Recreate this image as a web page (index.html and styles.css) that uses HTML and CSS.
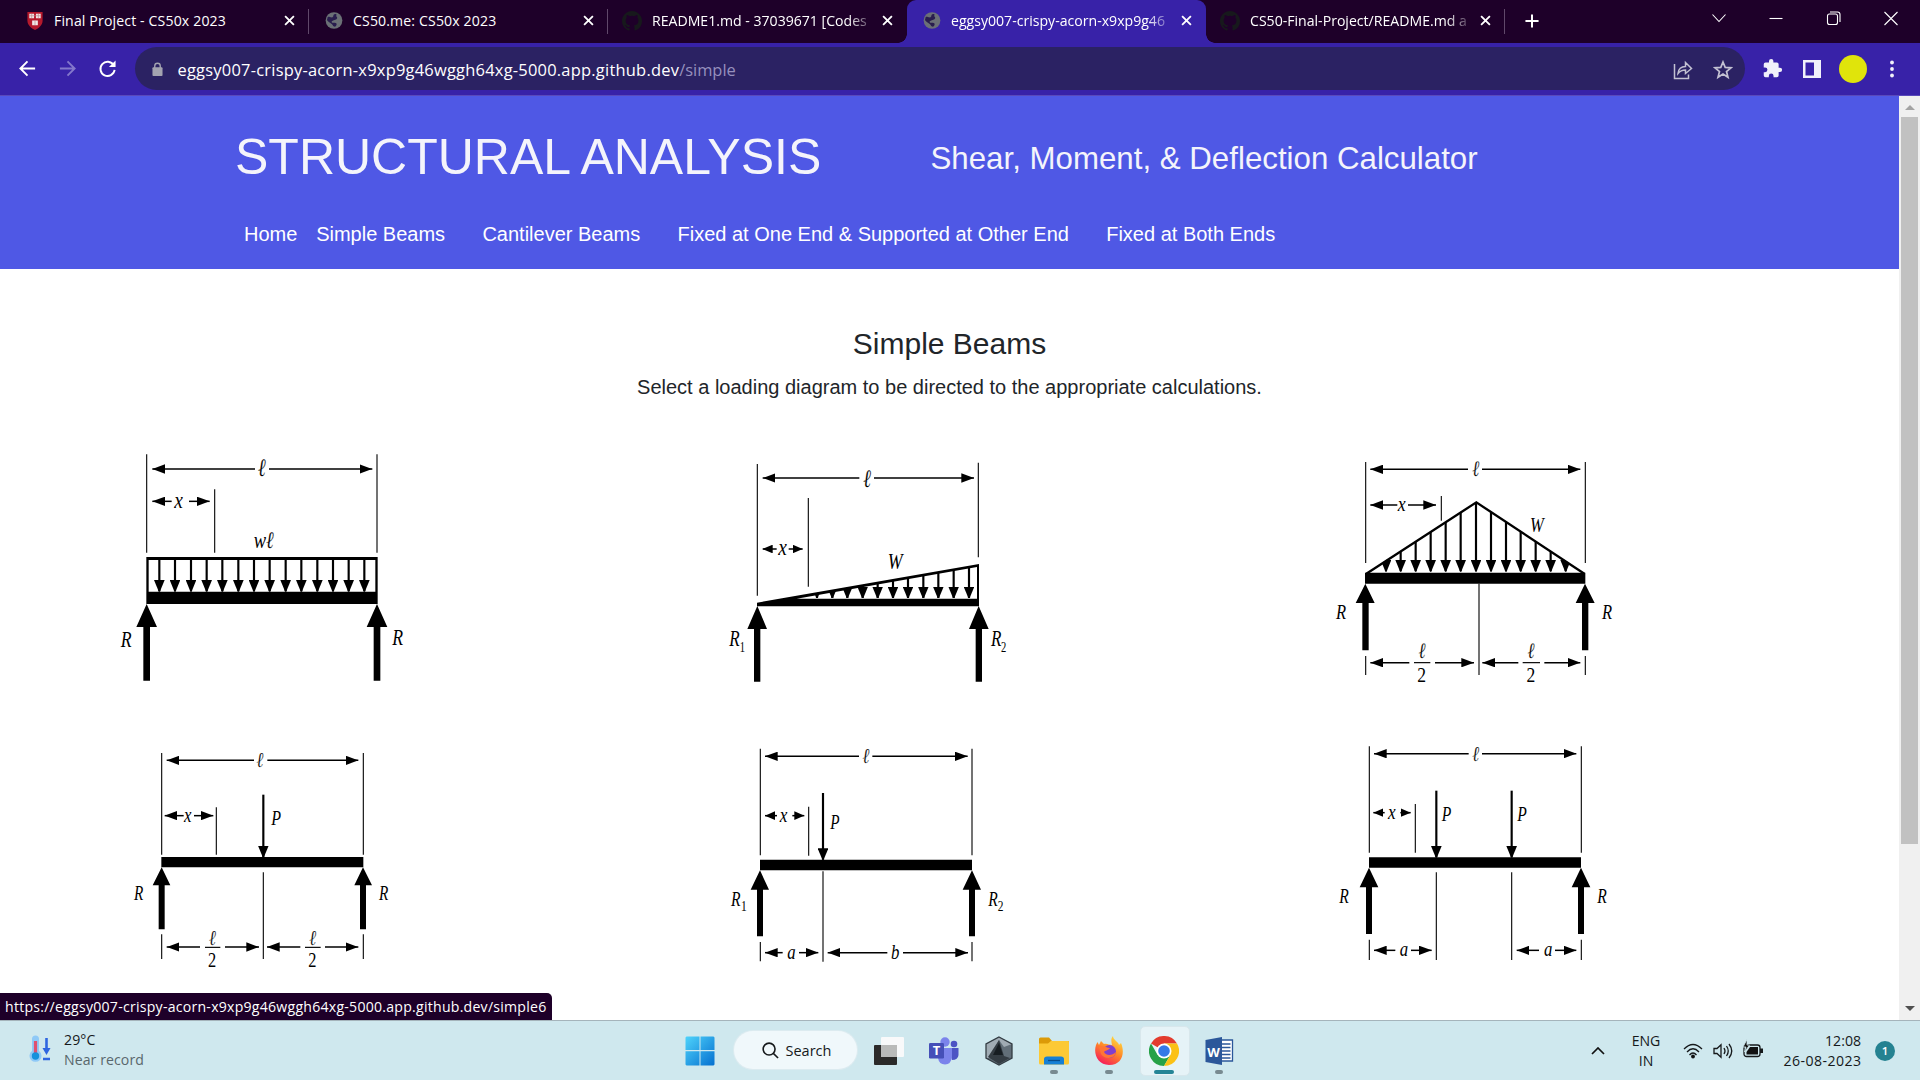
FILE: index.html
```html
<!DOCTYPE html>
<html lang="en">
<head>
<meta charset="utf-8">
<title>Structural Analysis</title>
<link rel="stylesheet" href="styles.css">
</head>
<body>
<svg class="defs" width="0" height="0" aria-hidden="true">
  <defs>
    <marker id="dim" viewBox="0 0 38 28" refX="38" refY="14" markerWidth="38" markerHeight="28" markerUnits="userSpaceOnUse" orient="auto-start-reverse"><path d="M0 0L38 14L0 28Z"/></marker>
    <marker id="dims" viewBox="0 0 30 26" refX="30" refY="13" markerWidth="30" markerHeight="26" markerUnits="userSpaceOnUse" orient="auto-start-reverse"><path d="M0 0L30 13L0 26Z"/></marker>
    <marker id="load" viewBox="0 0 35 32" refX="34" refY="16" markerWidth="35" markerHeight="32" markerUnits="userSpaceOnUse" orient="auto"><path d="M0 0L35 14.500V17.500L0 32Z"/></marker>
    <symbol id="globe" viewBox="0 0 20 20"><circle cx="10" cy="10" r="9.3" fill="#6b7076"/><path class="cut" d="M3 6C5 5.500 6 7 8 6.500C10 6 8.500 4 10.500 3C12 2.200 13.500 3 12.500 4.500C12 6 14 5.500 13.500 7.500C13 9.500 10.500 9 8 10.500C6.500 11.500 8 13 9.500 12.500C12 12 14 13 12.500 15.500C11.500 17.500 9.500 17 8.800 15.500C8 13.500 3.500 12 2.200 9.500Z"/></symbol>
    <symbol id="octo" viewBox="0 0 16 16"><path d="M8 0C3.580 0 0 3.580 0 8c0 3.540 2.290 6.530 5.470 7.590.4.070.55-.17.55-.38v-1.490c-2.010.37-2.530-.49-2.690-.94-.09-.23-.48-.94-.82-1.130-.28-.15-.68-.52-.01-.53.63-.01 1.080.58 1.230.82.72 1.210 1.870.87 2.330.66.07-.52.28-.87.51-1.070-1.780-.2-3.640-.89-3.640-3.950 0-.87.31-1.590.82-2.150-.08-.2-.36-1.020.08-2.120 0 0 .67-.21 2.200.82a7.400 7.400 0 0 1 4 0c1.530-1.040 2.200-.82 2.200-.82.44 1.100.16 1.920.08 2.120.51.56.82 1.270.82 2.150 0 3.070-1.870 3.750-3.650 3.950.29.25.54.73.54 1.480v2.200c0 .21.15.46.55.38A8 8 0 0 0 16 8c0-4.420-3.580-8-8-8Z" fill="currentColor"/></symbol>
    <symbol id="x" viewBox="0 0 12 12"><path d="M1.200 1.200L10.800 10.800M10.800 1.200L1.200 10.800" stroke="#fff" stroke-width="2" fill="none"/></symbol>
  </defs>
</svg>

<div class="tabstrip">
  <div class="tab">
    <svg class="fav" viewBox="0 0 18 20"><path d="M1 1H17V10C17 15 13 18 9 20C5 18 1 15 1 10Z" fill="#b5192c"/><path d="M3 3H8V7.500H3ZM10 3H15V7.500H10ZM6 10H12V15H6Z" fill="#f1e6e6"/><path d="M5.500 3V7.500M12.500 3V7.500M9 10V15M3 5H15" stroke="#b5868a" stroke-width=".7"/></svg>
    <span class="title">Final Project - CS50x 2023</span><svg class="close"><use href="#x"/></svg>
  </div>
  <div class="tab"><svg class="fav"><use href="#globe"/></svg><span class="title">CS50.me: CS50x 2023</span><svg class="close"><use href="#x"/></svg></div>
  <div class="tab last"><svg class="fav octo"><use href="#octo"/></svg><span class="title fade">README1.md - 37039671 [Codes</span><svg class="close"><use href="#x"/></svg></div>
  <div class="tab active"><svg class="fav"><use href="#globe"/></svg><span class="title fade">eggsy007-crispy-acorn-x9xp9g46</span><svg class="close"><use href="#x"/></svg></div>
  <div class="tab"><svg class="fav octo"><use href="#octo"/></svg><span class="title fade">CS50-Final-Project/README.md a</span><svg class="close"><use href="#x"/></svg></div>
  <svg class="plus" viewBox="0 0 16 16"><path d="M8 .5V15.500M.5 8H15.500" stroke="#fff" stroke-width="2.300"/></svg>
  <div class="winctl">
    <svg viewBox="0 0 16 16"><path d="M1.500 4.500L8 11.500L14.500 4.500"/></svg>
    <svg viewBox="0 0 16 16"><path d="M1.500 8.500H14.500"/></svg>
    <svg viewBox="0 0 16 16"><rect x="1.500" y="4" width="10" height="10.500" rx="2"/><path d="M4 2H11.500Q14 2 14 4.500V12"/></svg>
    <svg viewBox="0 0 16 16"><path d="M1.500 2L14.500 15M14.500 2L1.500 15"/></svg>
  </div>
</div>

<div class="toolbar">
  <div class="navbtns">
    <svg viewBox="0 0 20 20"><path d="M18 10H3M10 2.500L2.500 10L10 17.500"/></svg>
    <svg class="dim" viewBox="0 0 20 20"><path d="M2 10H17M10 2.500L17.500 10L10 17.500"/></svg>
    <svg viewBox="0 0 20 20"><path d="M16.500 6.500A7.500 7.500 0 1 0 17.500 11.500"/><path d="M18.500 1.500V8.500H11.500Z" fill="#fff" stroke="none"/></svg>
  </div>
  <div class="omnibox">
    <svg class="lock" viewBox="0 0 12 15"><rect x="0.500" y="5" width="11" height="9.500" rx="1" fill="#a3a3b0"/><path d="M3 6V3.700A3 3 0 0 1 9 3.700V6" fill="none" stroke="#a3a3b0" stroke-width="1.500"/></svg>
    <span class="url">eggsy007-crispy-acorn-x9xp9g46wggh64xg-5000.app.github.dev<span class="path">/simple</span></span>
    <svg class="oicon" viewBox="0 0 20 20"><path d="M1.500 4V18.500H15.500V14.500M5 13.500C5.500 9 8 6.500 12.500 6.500V2.500L18.500 8.500L12.500 13.500V10C9 10 7 11 5 13.500Z"/></svg>
    <svg class="oicon star" viewBox="0 0 20 20"><path d="M10 2L12.200 7.400L18 7.800L13.500 11.500L15 17.300L10 14.100L5 17.300L6.500 11.500L2 7.800L7.800 7.400Z"/></svg>
  </div>
  <div class="actions">
    <svg viewBox="0 0 24 24"><path fill="#f1f1fa" d="M20.500 11H19V7a2 2 0 0 0-2-2h-4V3.500a2.500 2.500 0 0 0-5 0V5H4a2 2 0 0 0-2 2v3.800h1.500a2.700 2.700 0 0 1 0 5.400H2V20a2 2 0 0 0 2 2h3.800v-1.500a2.700 2.700 0 0 1 5.400 0V22H17a2 2 0 0 0 2-2v-4h1.500a2.500 2.500 0 0 0 0-5z"/></svg>
    <svg class="panel" viewBox="0 0 20 20"><path fill="#f1f1fa" fill-rule="evenodd" d="M1 1H19V19H1ZM3.500 3.500V16.500H12V3.500Z"/></svg>
    <span class="avatar"></span>
    <svg class="dots" viewBox="0 0 6 20"><g fill="#f1f1fa"><circle cx="3" cy="3.500" r="1.900"/><circle cx="3" cy="10" r="1.900"/><circle cx="3" cy="16.500" r="1.900"/></g></svg>
  </div>
</div>

<div class="viewport">
  <div class="page">
    <header class="header">
      <div class="brand"><h1>STRUCTURAL ANALYSIS</h1><p>Shear, Moment, &amp; Deflection Calculator</p></div>
      <nav class="menu"><a class="home">Home</a><a>Simple Beams</a><a>Cantilever Beams</a><a>Fixed at One End &amp; Supported at Other End</a><a>Fixed at Both Ends</a></nav>
    </header>
    <main>
      <h2>Simple Beams</h2>
      <p class="lead">Select a loading diagram to be directed to the appropriate calculations.</p>
      <div class="beams">
        <svg class="beam big" viewBox="0 0 990 810">
          <path class="ext" d="M140 73V368M831 73V368M344 178V368"/>
          <path class="arr" d="M465 117H157"/><path class="arr" d="M507 117H817"/><path class="arr" d="M215 214H157"/><path class="arr" d="M267 214H329"/>
          <path d="M139 381H833V522H139ZM146 390V485H826V390Z" fill-rule="evenodd"/>
          <g class="loads"><path d="M178 388V484"/><path d="M225 388V484"/><path d="M273 388V484"/><path d="M320 388V484"/><path d="M367 388V484"/><path d="M415 388V484"/><path d="M462 388V484"/><path d="M509 388V484"/><path d="M557 388V484"/><path d="M604 388V484"/><path d="M652 388V484"/><path d="M699 388V484"/><path d="M746 388V484"/><path d="M793 388V484"/></g>
          <path d="M140 522L171 591H150V752H130V591H109ZM831 522L862 591H841V752H821V591H800Z"/>
          <text class="c ell" transform="translate(485 138) scale(.8 1.05)">ℓ</text>
          <text transform="translate(223 234) scale(.82 1)">x</text>
          <text transform="translate(461 353) scale(.78 1)">w<tspan class="ell">ℓ</tspan></text>
          <text transform="translate(62 651) scale(.75 1)">R</text><text transform="translate(877 646) scale(.75 1)">R</text>
        </svg>
        <svg class="beam big" viewBox="0 0 990 810">
          <path class="ext" d="M172 102V497M835 98V382M325 204V470"/>
          <path class="arr" d="M478 144H188"/><path class="arr" d="M522 144H822"/><path class="arrs" d="M230 357H188"/><path class="arrs" d="M266 357H308"/>
          <path d="M171 518L837 402V529H171ZM290 506H831V411Z" fill-rule="evenodd"/>
          <clipPath id="wedge"><path d="M172 520L836 405V528H172Z"/></clipPath>
          <g class="loads" clip-path="url(#wedge)"><path d="M351 400V504"/><path d="M397 400V504"/><path d="M442 400V504"/><path d="M488 400V504"/><path d="M533 400V504"/><path d="M579 400V504"/><path d="M624 400V504"/><path d="M670 400V504"/><path d="M715 400V504"/><path d="M761 400V504"/><path d="M807 400V504"/></g>
          <path d="M172 528L201 597H181V755H162V597H142ZM836 528L866 597H846V755H827V597H807Z"/>
          <text class="c ell" transform="translate(501 170) scale(.8 1.05)">ℓ</text>
          <text transform="translate(235 376) scale(.82 1)">x</text>
          <text transform="translate(563 416) scale(.75 1)">W</text>
          <text transform="translate(88 649) scale(.72 1)">R</text><text class="sub" transform="translate(119 665) scale(.72 1)">1</text>
          <text transform="translate(873 649) scale(.72 1)">R</text><text class="sub" transform="translate(903 665) scale(.72 1)">2</text>
        </svg>
        <svg class="beam" viewBox="0 0 990 810">
          <path class="ext" d="M167 96V399M826 96V399M394 198V272M507 461V735M167 678V735M826 678V735M312 698H361M638 698H690"/>
          <path class="arr" d="M474 118H181"/><path class="arr" d="M516 118H811"/><path class="arr" d="M262 225H181"/><path class="arr" d="M294 225H378"/>
          <path class="arr" d="M298 698H181"/><path class="arr" d="M375 698H492"/><path class="arr" d="M625 698H517"/><path class="arr" d="M703 698H811"/>
          <path d="M169 431L499 217L823 431" fill="none" stroke="#000" stroke-width="7"/>
          <path d="M165 428H826V461H165Z"/>
          <clipPath id="tri"><path d="M165 432L499 215L827 432Z"/></clipPath>
          <g class="loads" clip-path="url(#tri)"><path d="M228 215V424"/><path d="M272 215V424"/><path d="M317 215V424"/><path d="M362 215V424"/><path d="M407 215V424"/><path d="M452 215V424"/><path d="M498 215V424"/><path d="M543 215V424"/><path d="M588 215V424"/><path d="M632 215V424"/><path d="M677 215V424"/><path d="M722 215V424"/><path d="M767 215V424"/></g>
          <path d="M166 461L194 519H176V661H157V519H137ZM825 461L854 519H835V661H816V519H797Z"/>
          <text class="c ell" transform="translate(497 139) scale(.82 1.08)">ℓ</text>
          <text transform="translate(263 243) scale(.86 1)">x</text><text transform="translate(660 306) scale(.8 1)">W</text>
          <text transform="translate(78 568) scale(.8 1)">R</text><text transform="translate(876 568) scale(.8 1)">R</text>
          <text class="c ell" transform="translate(336 684) scale(.82 1.05)">ℓ</text><text class="c up" transform="translate(335 757) scale(.85 1)">2</text>
          <text class="c ell" transform="translate(663 684) scale(.82 1.05)">ℓ</text><text class="c up" transform="translate(663 757) scale(.85 1)">2</text>
        </svg>
        <svg class="beam low" viewBox="0 0 990 750">
          <path class="ext" d="M185 69V374M790 69V374M349 232V374M490 427V687M185 613V687M790 613V687M315 652H361M615 652H662"/>
          <path class="arr" d="M462 91H200"/><path class="arr" d="M502 91H775"/><path class="arr" d="M251 257H194"/><path class="arr" d="M282 257H340"/>
          <path class="arr" d="M300 651H200"/><path class="arr" d="M375 651H477"/><path class="arr" d="M601 651H501"/><path class="arr" d="M675 651H775"/>
          <path d="M184 381H790V412H184Z"/><g class="loads"><path d="M490 194V381"/></g>
          <path d="M185 412L211 466H194V598H176V466H158ZM789 412L816 466H798V598H780V466H763Z"/>
          <text class="c ell" transform="translate(480 112) scale(.82 1.05)">ℓ</text>
          <text transform="translate(252 275) scale(.84 1)">x</text><text transform="translate(514 284) scale(.8 1)">P</text>
          <text transform="translate(102 511) scale(.76 1)">R</text><text transform="translate(837 511) scale(.76 1)">R</text>
          <text class="c ell" transform="translate(337 644) scale(.82 1.05)">ℓ</text><text class="c up" transform="translate(336 711) scale(.82 1)">2</text>
          <text class="c ell" transform="translate(638 644) scale(.82 1.05)">ℓ</text><text class="c up" transform="translate(637 711) scale(.82 1)">2</text>
        </svg>
        <svg class="beam low" viewBox="0 0 990 750">
          <path class="ext" d="M181 56V376M816 56V376M326 230V377M369 424V695M181 636V694M816 636V694"/>
          <path class="arr" d="M477 79H195"/><path class="arr" d="M517 79H803"/><path class="arrs" d="M231 257H195"/><path class="arrs" d="M277 257H313"/>
          <path class="arr" d="M248 668H195"/><path class="arr" d="M297 668H355"/><path class="arr" d="M562 668H383"/><path class="arr" d="M609 668H804"/>
          <path d="M180 389H816V421H180Z"/><g class="loads"><path d="M369 189V389"/></g>
          <path d="M180 421L207 479H189V619H171V479H152ZM816 421L843 479H825V619H807V479H788Z"/>
          <text class="c ell" transform="translate(498 98) scale(.82 1.05)">ℓ</text>
          <text transform="translate(239 275) scale(.86 1)">x</text><text transform="translate(391 297) scale(.76 1)">P</text>
          <text transform="translate(93 527) scale(.78 1)">R</text><text class="sub" transform="translate(123 543) scale(.78 1)">1</text>
          <text transform="translate(865 527) scale(.78 1)">R</text><text class="sub" transform="translate(893 543) scale(.78 1)">2</text>
          <text transform="translate(262 686) scale(.84 1)">a</text><text transform="translate(573 686) scale(.84 1)">b</text>
        </svg>
        <svg class="beam low" viewBox="0 0 990 750">
          <path class="ext" d="M178 49V368M814 49V368M316 222V368M379 427V690M605 427V690M178 629V690M814 629V690"/>
          <path class="arr" d="M476 71H192"/><path class="arr" d="M516 71H799"/><path class="arrs" d="M224 248H190"/><path class="arrs" d="M271 248H302"/>
          <path class="arr" d="M256 661H192"/><path class="arr" d="M303 661H365"/><path class="arr" d="M687 661H620"/><path class="arr" d="M735 661H799"/>
          <path d="M177 382H813V413H177Z"/><g class="loads"><path d="M379 182V382"/><path d="M605 182V382"/></g>
          <path d="M177 413L205 472H186V612H168V472H149ZM813 413L841 472H822V612H804V472H785Z"/>
          <text class="c ell" transform="translate(497 92) scale(.82 1.05)">ℓ</text>
          <text transform="translate(234 266) scale(.86 1)">x</text><text transform="translate(395 274) scale(.78 1)">P</text><text transform="translate(622 274) scale(.78 1)">P</text>
          <text transform="translate(88 518) scale(.78 1)">R</text><text transform="translate(862 518) scale(.78 1)">R</text>
          <text transform="translate(269 679) scale(.84 1)">a</text><text transform="translate(702 679) scale(.84 1)">a</text>
        </svg>
      </div>
    </main>
  </div>
  <div class="scrollbar"><i class="tri up"></i><div class="thumb"></div><i class="tri down"></i></div>
  <div class="status">https://eggsy007-crispy-acorn-x9xp9g46wggh64xg-5000.app.github.dev/simple6</div>
</div>

<footer class="taskbar">
  <div class="weather">
    <svg viewBox="0 0 22 28"><path d="M3 4A3.500 3.500 0 0 1 10 4V16A6 6 0 1 1 3 16Z" fill="#8fc9f7"/><path d="M6.500 6V20" stroke="#e0506e" stroke-width="3.200"/><circle cx="6.500" cy="21" r="3.700" fill="#1691dc"/><path d="M17.500 3V16M14 24H21" stroke="#2f66e0" stroke-width="2.600"/><path d="M13.500 13H21.500L17.500 20Z" fill="#2f66e0"/></svg>
    <div><div>29°C</div><div class="muted">Near record</div></div>
  </div>
  <div class="apps">
    <div class="app"><svg viewBox="0 0 30 30"><defs><linearGradient id="wg" x2="1" y2="1"><stop stop-color="#4fd3fb"/><stop offset="1" stop-color="#0570d0"/></linearGradient></defs><path fill="url(#wg)" d="M1.500.5H14.500V14H.5V1.500ZM15.500.5H28.500L29.500 1.500V14H15.500ZM.5 15.200H14.500V29.500H1.500L.5 28.500ZM15.500 15.200H29.500V28.500L28.500 29.500H15.500Z"/></svg></div>
    <div class="search"><svg viewBox="0 0 18 18"><circle cx="7.500" cy="7.500" r="6.300"/><path d="M12 12L17 17"/></svg>Search</div>
    <div class="app"><svg viewBox="0 0 30 30"><rect x="0" y="9" width="23" height="20" rx="1" fill="#2b2a29"/><rect x="7" y="1" width="23" height="20" rx="1" fill="#fafafa" opacity=".95"/><path d="M7 9H23V21H7Z" fill="#b9bab9"/></svg></div>
    <div class="app"><svg viewBox="0 0 30 30"><circle cx="25" cy="8" r="3.300" fill="#4d54c4"/><path d="M20 12H29.500V19Q29 24 23 24Z" fill="#4d54c4"/><circle cx="16" cy="6" r="4.700" fill="#7b83eb"/><path d="M9 12H23V21Q22 28.500 16 28.500Q10 28.500 9 22Z" fill="#7b83eb"/><rect x="0" y="7" width="15" height="15.500" rx="1.300" fill="#454fb8"/><text x="7.500" y="19" text-anchor="middle" class="logo">T</text></svg></div>
    <div class="app"><svg viewBox="0 0 30 30"><path d="M15 1L28 8V22L15 29L2 22V8Z" fill="#626e78"/><path d="M15 1L28 8L20 11L15 4L6 22L2 22V8Z" fill="#a0abb3"/><path d="M15 4L20 20L26 22L15 28L4 21Z" fill="#343c43"/><path d="M15 7L19 19L9 19Z" fill="#171d22"/><path d="M15 1L28 8V22L15 29L2 22V8Z" fill="none" stroke="#333c43" stroke-width="1.300"/></svg></div>
    <div class="app on"><svg viewBox="0 0 30 30"><path d="M0 3Q0 1.500 1.500 1.500H10L13 5H29Q30 5 30 6V12H0Z" fill="#dc9a07"/><path d="M0 7.500H9L12 5H29Q30 5 30 6.500V27Q30 28.500 28.500 28.500H1.500Q0 28.500 0 27Z" fill="#fcc935"/><path d="M5 28.500V23Q5 20.500 8 20.500H22Q25 20.500 25 23V28.500Z" fill="#1680d5"/><path d="M9 24.500H21" stroke="#084c8b" stroke-width="1.300"/></svg></div>
    <div class="app on"><svg viewBox="0 0 30 30"><defs><linearGradient id="ff" x1=".8" x2=".25" y2="1"><stop stop-color="#ffe141"/><stop offset=".5" stop-color="#ff8427"/><stop offset="1" stop-color="#f5155f"/></linearGradient></defs><path d="M19 0C19 4 25 6 25 9L27 7C31 16 29 29 15 29C4 29-1 18 2 9L3.500 6L5 9L7 5L10 8C13 7 15 9 18 9C17 5 17 2 19 0Z" fill="url(#ff)"/><circle cx="15.500" cy="15.500" r="6.500" fill="#803fce"/><path d="M5 11C10 9 12 12 16 12C14 15 11 14 10 16C12 20 18 20 22 16C21 23 11 24 7 18Z" fill="#ff7534"/></svg></div>
    <div class="app on current"><svg viewBox="0 0 30 30"><path d="M15 15L2 7.500A15 15 0 0 1 28 7.500H15Z" fill="#e33b2e"/><path d="M15 15L21.500 18.750L15 30A15 15 0 0 1 2 7.500L8.500 18.750Z" fill="#26a147"/><path d="M15 7.500H28A15 15 0 0 1 15 30L21.500 18.750Z" fill="#fbc116"/><circle cx="15" cy="15" r="7.500" fill="#fff"/><circle cx="15" cy="15" r="5.800" fill="#3579e7"/></svg></div>
    <div class="app on"><svg viewBox="0 0 30 30"><path d="M16 4H28.500V25H16Z" fill="#fff" stroke="#2b579a" stroke-width="1.300"/><path d="M18 8H26.500M18 11.500H26.500M18 15H26.500M18 18.500H26.500M18 22H26.500" stroke="#2b579a" stroke-width="1.300"/><path d="M1.500 4L18 1V29L1.500 26Z" fill="#2b579a"/><text x="9.500" y="20.500" text-anchor="middle" class="logo">W</text></svg></div>
  </div>
  <div class="tray">
    <svg class="chev" viewBox="0 0 14 8"><path d="M1 7L7 1L13 7"/></svg>
    <div class="lang">ENG<br>IN</div>
    <svg class="sys" viewBox="0 0 20 16"><path d="M1 6Q10-3 19 6M4 9Q10 2.500 16 9M6.500 12Q10 8 13.500 12"/><circle cx="10" cy="13.500" r="1.900" fill="#111" stroke="none"/></svg>
    <svg class="sys" viewBox="0 0 20 16"><path d="M1 5.500H4L8 1.800V14.200L4 10.500H1ZM11 5Q13 8 11 11M13.500 3Q17 8 13.500 13M16 1Q21.500 8 16 15"/></svg>
    <svg class="sys" viewBox="0 0 20 16"><rect x="1" y="2" width="16" height="11.500" rx="2.500"/><path d="M3.500 11.500V9L7 4H15V11.500Z" fill="#111" stroke="none"/><path d="M18.500 5.500V10" stroke-width="3"/><path d="M4-3.500L0 4H3L1.500 9L6.500 2H4Z" fill="#111" stroke="#cfe8ee" stroke-width=".8"/></svg>
    <div class="clock">12:08<br><span class="date">26-08-2023</span></div>
    <span class="badge">1</span>
  </div>
</footer>
</body>
</html>
```
FILE: styles.css
```css
* { box-sizing: border-box; }
body { margin: 0; width: 1920px; height: 1080px; overflow: hidden; display: flex; flex-direction: column; background: #fff; font-family: "Open Sans", "Noto Sans", sans-serif; font-size: 14.1px; }
h1, h2, p { margin: 0; font-weight: 400; }
svg { display: block; flex: none; }
.defs { height: 0; position: absolute; }

.tabstrip { height: 43px; flex: none; background: #1e0029; display: flex; padding-left: 10px; color: #fff; }
.tab { width: 299px; height: 43px; padding: 0 14px 2px 16px; display: flex; align-items: center; flex: none; background: linear-gradient(#60486a, #60486a) right 0 top 9px / 1px 25px no-repeat; }
.tab.last { background: none; }
.tab.active { background: #3822a8; border-radius: 9px 9px 0 0; position: relative; }
.tab.active::before, .tab.active::after { content: ""; position: absolute; bottom: 0; width: 9px; height: 9px; }
.tab.active::before { left: -9px; background: radial-gradient(circle at 0 0, transparent 8.5px, #3822a8 9px); }
.tab.active::after { right: -9px; background: radial-gradient(circle at 100% 0, transparent 8.5px, #3822a8 9px); }
.fav { width: 18px; height: 19px; margin-right: 10px; }
.octo { color: #17191c; width: 20px; height: 20px; margin: 0 10px 0 -2px; }
.cut { fill: #291d4e; }
.title { flex: 1; white-space: nowrap; margin-right: 9px; line-height: 20px; letter-spacing: .14px; }
.fade { letter-spacing: 0; mask-image: linear-gradient(90deg, #000 196px, rgba(0, 0, 0, .15) 220px); }
.close { width: 11px; height: 11px; }
.plus { width: 14px; height: 14px; margin: 14px 0 0 20px; }
.winctl { margin-left: auto; padding: 10px 21px 0 0; display: flex; gap: 41.5px; }
.winctl svg { width: 16px; height: 16px; fill: none; stroke: #fff; stroke-width: 1.1; }

.toolbar { height: 53px; flex: none; background: #3822a8; border-bottom: 1px solid #5949bb; display: flex; align-items: center; padding-bottom: 1px; }
.navbtns { width: 135px; padding-left: 18px; display: flex; gap: 21px; }
.navbtns svg { width: 19px; height: 19px; fill: none; stroke: #fff; stroke-width: 2; }
.navbtns .dim { stroke: #8478cb; }
.omnibox { width: 1610px; height: 43px; border-radius: 22px; background: #2b2263; display: flex; align-items: center; padding: 2px 12px 0 17px; color: #fff; }
.lock { width: 11px; height: 15px; margin-right: 14.5px; }
.url { flex: 1; font-size: 16.45px; white-space: nowrap; line-height: 24px; letter-spacing: .23px; }
.path { color: #9690bd; letter-spacing: 0; }
.oicon { width: 20px; height: 20px; fill: none; stroke: #c3c1d2; stroke-width: 1.5; margin-left: 20px; }
.oicon.star { stroke-width: 1.7; }
.actions { display: flex; align-items: center; padding-left: 17px; }
.actions svg { width: 21px; height: 21px; }
.actions .panel { margin-left: 19px; width: 20px; height: 20px; }
.avatar { width: 28px; height: 28px; border-radius: 50%; background: #e0e40b; margin-left: 17px; }
.actions .dots { width: 6px; height: 20px; margin-left: 22px; }

.viewport { height: 924px; flex: none; display: flex; position: relative; }
.page { width: 1899px; font-family: "Liberation Sans", Arial, sans-serif; font-size: 20px; color: #212529; }
.header { height: 173px; background: #4f58e5; color: #f4f4fb; }
.brand { height: 123px; padding: 32px 0 0 235px; display: flex; align-items: baseline; }
.brand h1 { font-size: 50px; line-height: 58px; width: 695.5px; white-space: nowrap; }
.brand p { font-size: 31.25px; line-height: 36px; position: relative; top: -5px; white-space: nowrap; }
.menu { display: flex; gap: 37.3px; padding-left: 244px; line-height: 30px; color: #fff; }
.menu .home { margin-right: -18.5px; }
main { padding-top: 57px; text-align: center; }
h2 { font-size: 30px; line-height: 36px; }
.lead { line-height: 30px; margin-top: 10px; }
.beams { display: grid; grid-template-columns: 600px 610px 330px; grid-template-rows: 270px 250px; row-gap: 30px; padding: 28px 0 0 100px; }
.beam { width: 330px; height: 270px; font-family: "Liberation Serif", "Times New Roman", serif; font-style: italic; font-size: 62px; }
.beam.big { font-size: 71px; }
.beam.low { height: 250px; font-size: 60px; }
.beam .sub { font-size: 44px; font-style: normal; }
.beam .up { font-style: normal; }
.beam .c { text-anchor: middle; }
.beam .ell { stroke: #fff; stroke-width: .35; }
.ext { stroke: #111; stroke-width: 3.5; fill: none; }
.arr, .arrs { stroke: #000; stroke-width: 4.5; fill: none; marker-end: url(#dim); }
.arrs { marker-end: url(#dims); }
.loads path { stroke: #000; stroke-width: 6.5; fill: none; marker-end: url(#load); }

.scrollbar { width: 21px; background: #f0f0f0; display: flex; flex-direction: column; align-items: center; }
.thumb { width: 17px; height: 727px; background: #c1c1c1; margin-top: 7px; }
.tri { width: 0; height: 0; border: 5px solid transparent; flex: none; }
.tri.up { border-top: 0; border-bottom-color: #a3a3a3; margin-top: 9px; }
.tri.down { border-bottom: 0; border-top-color: #505050; margin: auto 0 9px; }
.status { position: absolute; left: 0; bottom: 0; width: 552px; height: 27px; background: #1e0029; color: #fff; border-radius: 0 5px 0 0; padding-left: 5px; line-height: 27px; letter-spacing: .245px; white-space: nowrap; }

.taskbar { height: 60px; flex: none; background: #cfe8ee; border-top: 1px solid #a5b4bb; display: flex; color: #16191b; line-height: 20px; }
.weather { width: 672.5px; padding: 9px 0 0 29px; display: flex; gap: 13px; letter-spacing: .08px; }
.weather svg { width: 22px; height: 28px; margin-top: 5px; }
.muted { color: #59676c; }
.apps { display: flex; }
.app { width: 55px; height: 59px; display: flex; align-items: center; justify-content: center; position: relative; }
.app svg { width: 30px; height: 30px; }
.app.current::before { content: ""; position: absolute; left: 3.5px; top: 5px; width: 48px; height: 48px; border-radius: 5px; background: #e6f3f7; border: 1px solid #d8e7ec; }
.app.current svg { position: relative; }
.app.on::after { content: ""; position: absolute; left: 23.5px; top: 49px; width: 8px; height: 4px; border-radius: 2px; background: #788a90; }
.app.current::after { left: 17.5px; width: 20px; background: #258596; }
.logo { font: bold 13px "Open Sans", sans-serif; fill: #fff; }
.search { width: 123px; height: 38px; margin: 10px 5px 0 6px; border-radius: 19px; background: #f0f8fb; display: flex; align-items: center; padding: 1px 0 0 28px; gap: 7px; box-shadow: 0 0 0 1px #dcebf0; font-size: 14.5px; }
.search svg { width: 17px; height: 17px; fill: none; stroke: #16191b; stroke-width: 1.7; }
.tray { margin-left: auto; display: flex; align-items: center; padding-right: 25px; text-align: center; }
.chev { width: 14px; height: 8px; fill: none; stroke: #111; stroke-width: 1.7; margin-right: 26px; }
.lang { width: 30px; margin-right: 22px; }
.sys { width: 20px; height: 16px; margin-right: 10px; fill: none; stroke: #16191b; stroke-width: 1.3; overflow: visible; }
.clock { width: 88px; text-align: right; margin-right: 14px; white-space: nowrap; }
.date { letter-spacing: .45px; margin-right: -.45px; }
.badge { width: 20px; height: 20px; border-radius: 50%; background: #258291; color: #fff; font-size: 11.5px; font-weight: 600; line-height: 20px; }
```
